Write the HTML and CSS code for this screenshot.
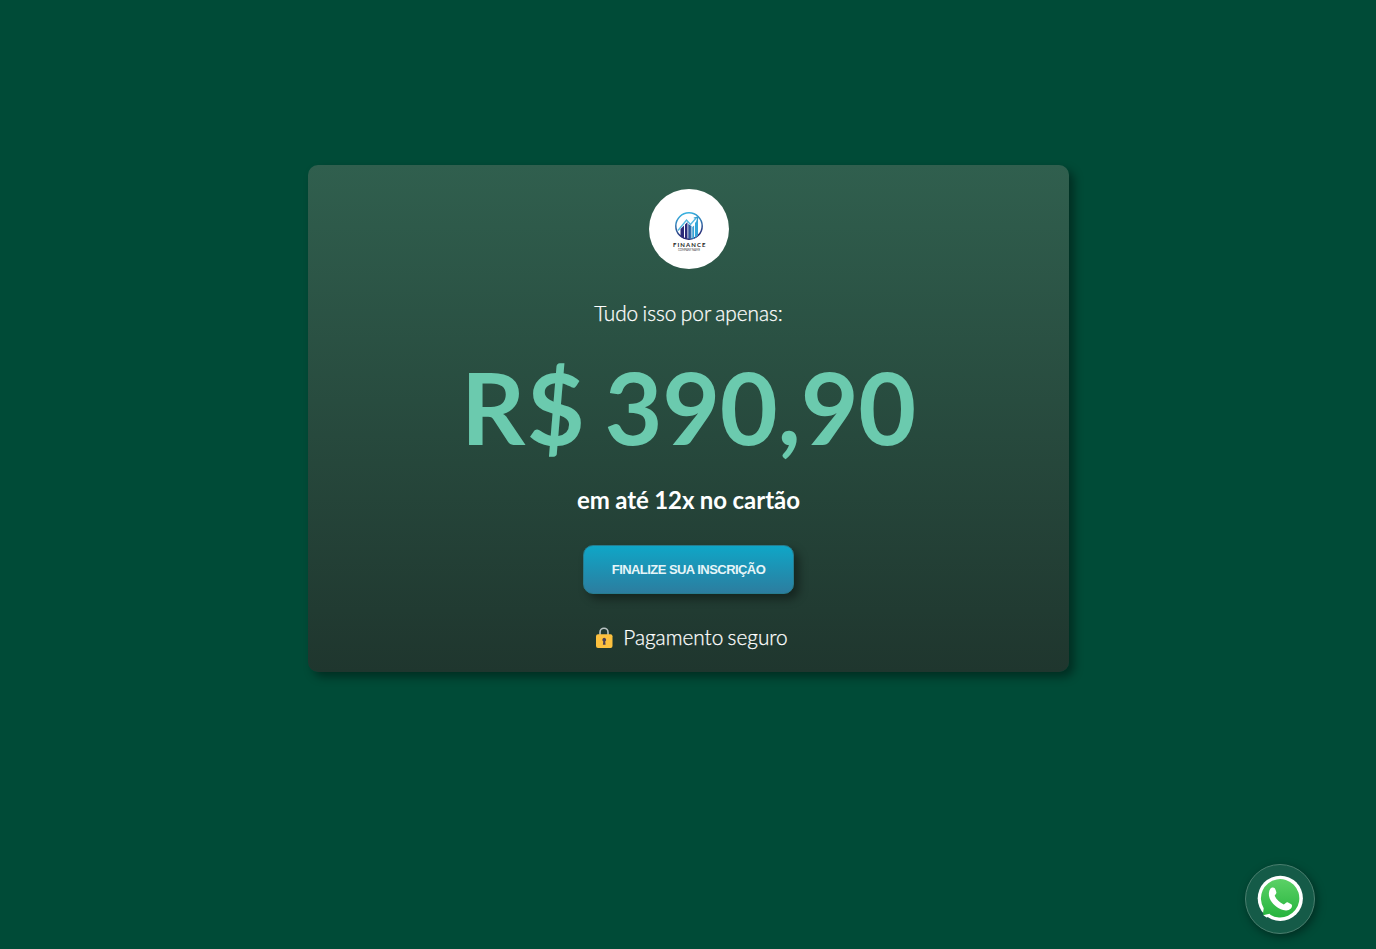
FILE: index.html
```html
<!DOCTYPE html>
<html lang="pt-BR">
<head>
<meta charset="utf-8">
<title>Finance</title>
<link rel="stylesheet" href="styles.css">
</head>
<body>
<main class="offer">
  <div class="logo">
    <svg width="80" height="80" viewBox="0 0 80 80">
      <defs>
        <linearGradient id="ring" x1="0" y1="0" x2="0.2" y2="1"><stop offset="0.1" stop-color="#37b0df"/><stop offset="1" stop-color="#29246f"/></linearGradient>
        <linearGradient id="bar" x1="0" y1="0" x2="1" y2="0"><stop offset="0.35" stop-color="#2c2a79"/><stop offset="0.75" stop-color="#34a5d8"/></linearGradient>
      </defs>
      <circle cx="40" cy="37" r="13.2" fill="none" stroke="url(#ring)" stroke-width="1.5"/>
      <path d="M31.500 40l3.500-3.500v13l-3.500-2zM36 35.500l2.500-2.500v17l-2.500-.5zM39.300 35l3.200 2v13h-3.200zM43.300 38l1.800-1.500v13l-1.800.5zM46 34l3-4v16.500l-3 2.500z" fill="url(#bar)"/>
      <path d="M29 41.500L37.500 31l4 4.500 6.500-7.500" fill="none" stroke="#55b9e2" stroke-width="1.400"/>
      <path d="M44.800 29l4-.8-.8 4.200" fill="none" stroke="#329ecf" stroke-width="1.200"/>
      <text class="logo-name" x="24" y="58.300" textLength="32.500">FINANCE</text>
      <text class="logo-tag" x="29" y="61.700" textLength="22">COMPANY NAME</text>
    </svg>
  </div>
  <p class="lead">Tudo isso por apenas:</p>
  <h1 class="price"><span class="currency">R</span>$ 390,90</h1>
  <h2 class="terms">em até 12x no cartão</h2>
  <button class="cta">FINALIZE SUA INSCRIÇÃO</button>
  <p class="secure">
    <svg width="18" height="22" viewBox="0 0 18 22">
      <path d="M5 9V5.200a4 4 0 0 1 8 0V9" fill="none" stroke="#b9c3c3" stroke-width="1.600"/>
      <rect x="1" y="7.300" width="16.500" height="13.700" rx="2" fill="#fcc13f"/>
      <path d="M9.200 10.800a2 2 0 0 1 1 3.700l.4 3.300H7.900l.4-3.300a2 2 0 0 1 .9-3.700z" fill="#4b4055"/>
    </svg>
    <span>Pagamento seguro</span>
  </p>
</main>
<a class="chat" href="#" aria-label="WhatsApp">
  <svg width="48" height="48" viewBox="0 0 48 48">
    <defs><linearGradient id="wa" x1="0" y1="0" x2="0" y2="1"><stop stop-color="#5bd166"/><stop offset="1" stop-color="#27b43e"/></linearGradient></defs>
    <circle cx="24.300" cy="23.300" r="22.600" fill="#fff"/>
    <path d="M6.800 40L7.700 33.200A19.200 19.200 0 1 1 14.200 39.700z" fill="url(#wa)"/>
    <path d="M4.500 37.200L7.300 38 7 40.700l2.700-.2 1.200 1.800-3.400 1.200z" fill="#155b48"/>
    <path d="M7.300 40.200l6.300-1.400 1.400 2-4.400 1.600z" fill="#fff"/>
    <path d="M14.300 13.700c1.200-1.600 3.500-1.700 4.500-.5.700 1.200 1.300 2.700 1.600 4 .3 1.600-1.500 2.500-1.700 3.600 1.700 3.700 4.900 6.900 9 8.700 1.300-.2 2.400-2.500 3.900-2.200l3.700 1.900c1.300.8.700 3.300-.4 4.400-1.900 2-5.100 2.300-7.800 1.400-6-2-11.100-6.200-13.400-11.600-1.400-3.300-1-7.400.6-9.700z" fill="#fff"/>
  </svg>
</a>
</body>
</html>
```
FILE: styles.css
```css
* { box-sizing: border-box; }
body {
  margin: 0;
  height: 949px;
  overflow: hidden;
  padding-top: 165px;
  background: #004b37;
  color: #fff;
  font-family: Lato, sans-serif;
}
.offer {
  width: 761px;
  height: 507px;
  margin: 0 auto 0 308px;
  padding-top: 24px;
  display: flex;
  flex-direction: column;
  align-items: center;
  border-radius: 10px;
  background: linear-gradient(#305f4e, #1f362e);
  box-shadow: 5px 5px 10px rgba(0, 0, 0, .4);
}
.logo {
  width: 80px;
  height: 80px;
  margin-left: 1px;
  border-radius: 50%;
  background: #fff;
}
.logo svg { display: block; }
.logo-name { font: 700 6px Lato, sans-serif; fill: #222; }
.logo-tag { font: 2.800px Lato, sans-serif; fill: #444; }
.lead {
  margin: 31px 0 0;
  font-size: 20.800px;
  font-weight: 300;
  line-height: 25px;
  word-spacing: -1.300px;
  -webkit-text-stroke: .25px #fff;
}
.price {
  margin: 21px 0 0;
  color: #6bcaae;
  font-size: 100px;
  line-height: 120px;
  letter-spacing: -.300px;
  word-spacing: -4px;
}
.currency { letter-spacing: 1.500px; }
.terms {
  margin: 19px 0 0;
  font-size: 24px;
  line-height: 29px;
  word-spacing: -.500px;
}
.cta {
  width: 211px;
  height: 49px;
  margin-top: 31px;
  padding: 0;
  border: 1px solid #267c8f;
  border-radius: 10px;
  background: linear-gradient(#0fa6c7, #2c7d9f);
  box-shadow: 5px 5px 10px rgba(0, 0, 0, .4);
  color: #e6f5f8;
  font: 700 13px "Liberation Sans", Arial, sans-serif;
  letter-spacing: -.550px;
  white-space: nowrap;
}
.secure {
  display: flex;
  align-items: center;
  gap: 10px;
  margin: 32px 0 0 6px;
  font-size: 20.800px;
  font-weight: 300;
  line-height: 25px;
}
.secure span {
  margin-top: -2px;
  word-spacing: -1.300px;
  -webkit-text-stroke: .25px #fff;
}
.chat {
  position: fixed;
  left: 1245px;
  top: 864px;
  width: 70px;
  height: 70px;
  display: grid;
  place-items: center;
  border: 1px solid #4b8070;
  border-radius: 50%;
  background: #155b48;
  box-shadow: 2px 3px 10px rgba(0, 0, 0, .4);
}
```
